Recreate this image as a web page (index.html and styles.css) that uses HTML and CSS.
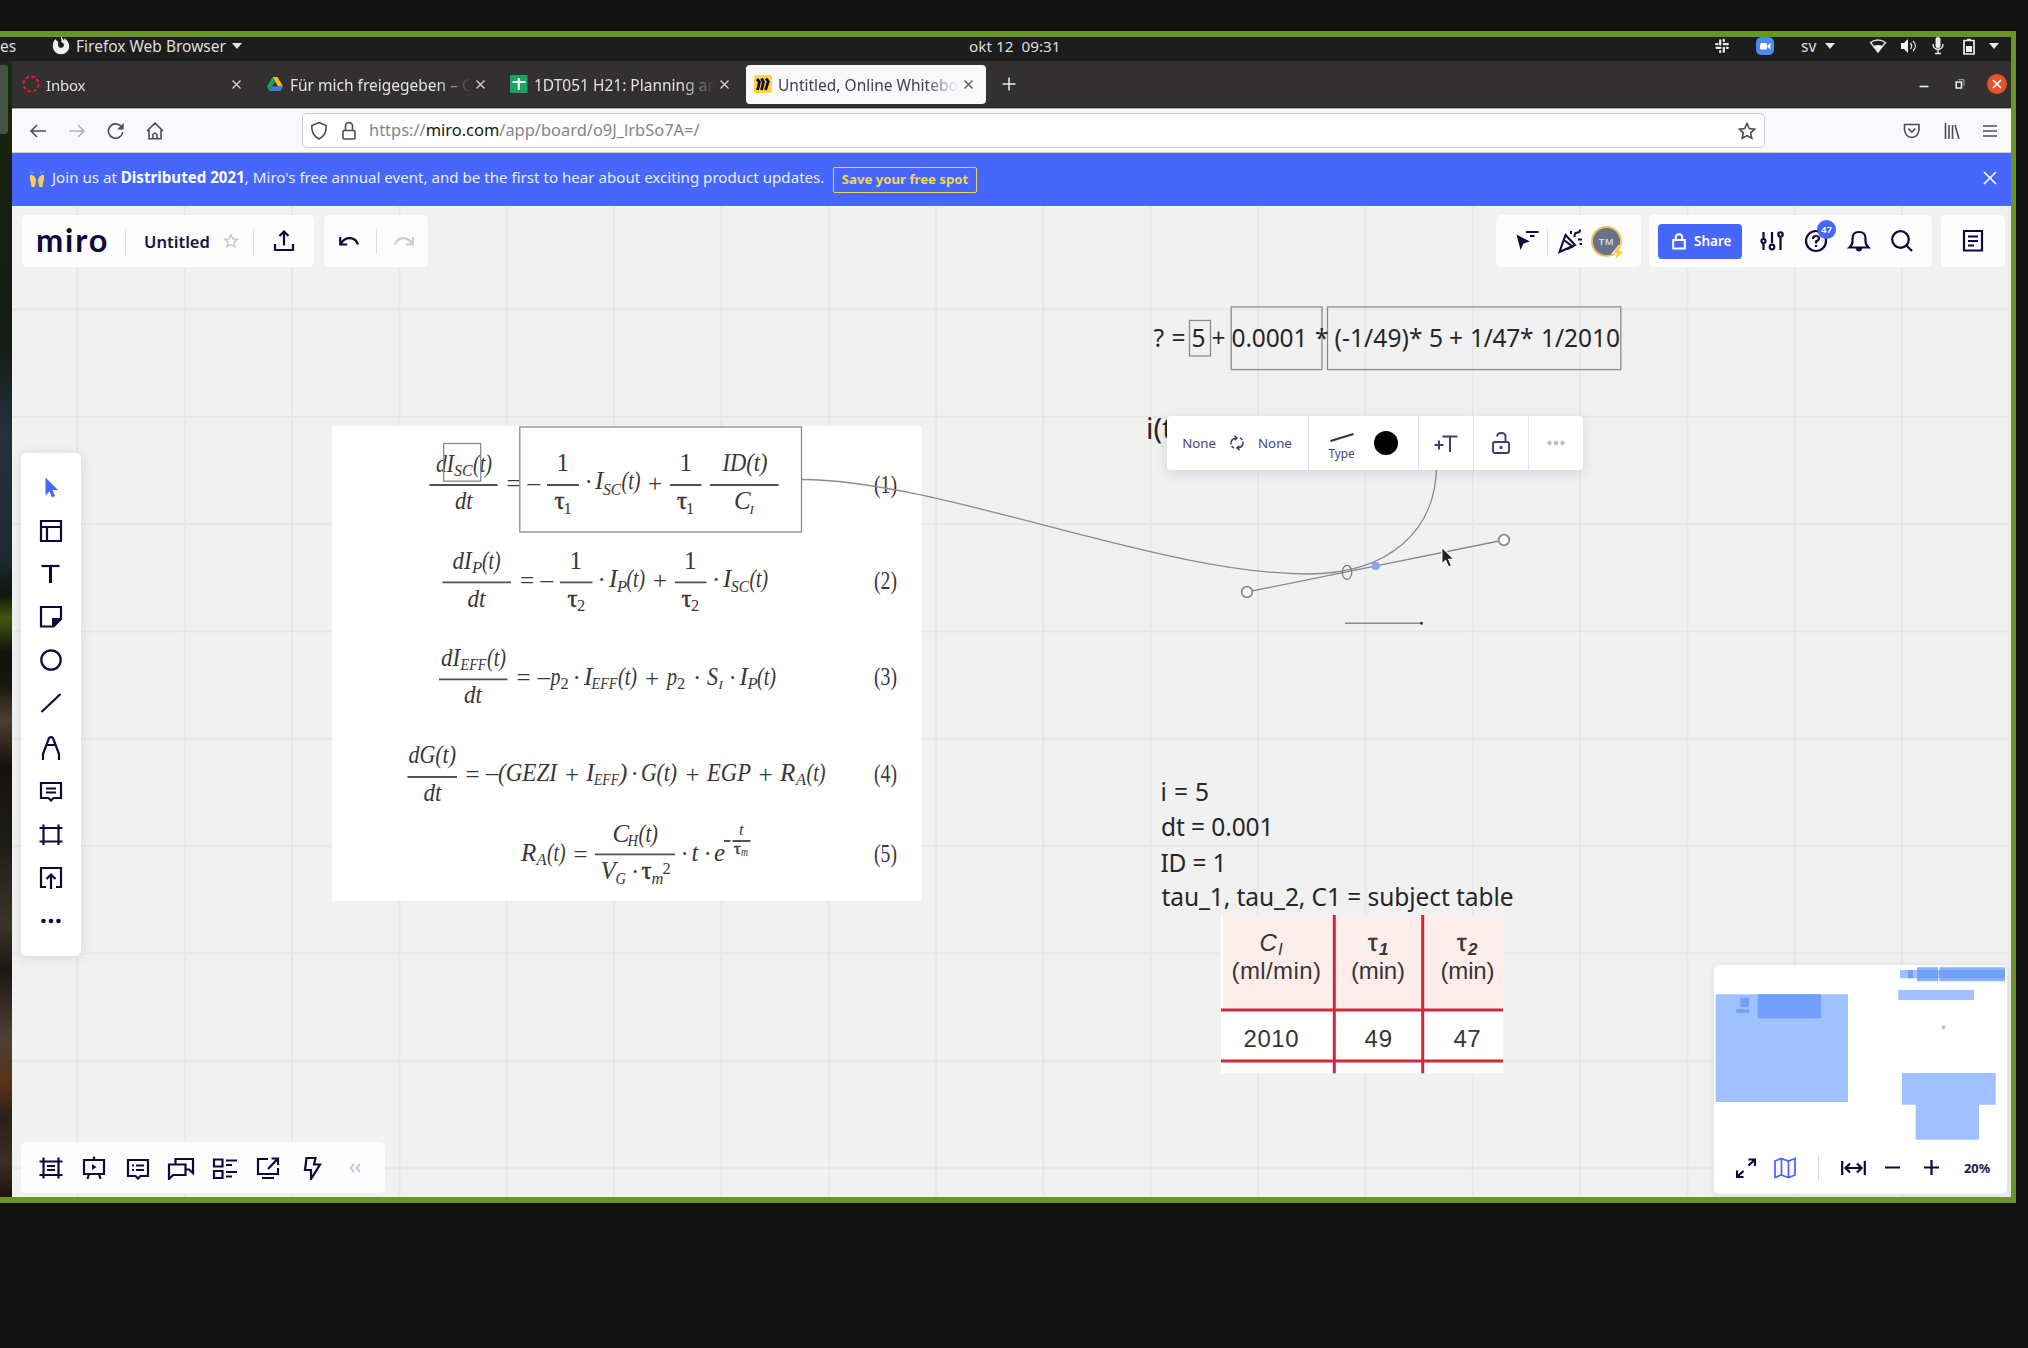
FILE: index.html
```html
<!DOCTYPE html>
<html lang="en">
<head>
<meta charset="utf-8">
<title>Untitled, Online Whiteboard</title>
<link rel="stylesheet" href="styles.css">
</head>
<body>
<div class="frame">
  <div class="sysbar">
    <span class="act">es</span>
    <svg class="fox" width="18" height="18" viewBox="0 0 18 18"><path d="M9 1.500c1 1.500.5 2.500 0 3.500 2.500.5 3.500 2.500 2.500 4.500-1 1.800-4 1.800-5 0C5.500 7 6.500 6 6 4.500 4.500 4 4 3 3.500 2 1.500 4 .8 6.500.8 9.200c0 4.500 3.600 8 8.200 8s8.200-3.500 8.200-8C17.200 5.500 15 2.500 12 1.200c.5 1 .5 2 0 2.500C11.500 2.500 10 1 9-.5z" fill="#eee"/></svg>
    <span class="app">Firefox Web Browser</span><i class="caret"></i>
    <span class="clock">okt 12&nbsp; 09:31</span>
    <div class="tray">
      <svg width="16" height="16" viewBox="0 0 16 16" stroke="#e6e6e6" stroke-width="2.300" stroke-linecap="round"><path d="M6.200 2.500v4M2.200 6.200h1.300M9.800 2v1M9.800 6.200h4M2.500 9.800h4M6.200 13.200v.8M9.800 9.800v4M12.800 9.800h1"/></svg>
      <svg width="18" height="18" viewBox="0 0 18 18"><rect width="18" height="18" rx="5.500" fill="#4a8cf0"/><rect x="4" y="6" width="7" height="6.500" rx="1.500" fill="#fff"/><path d="M11.500 8.500 14.500 6v6.500l-3-2.500z" fill="#fff"/></svg>
      <span class="sv">sv</span><i class="caret"></i>
      <svg width="18" height="16" viewBox="0 0 18 16"><path d="M1.500 4.500C6 1 12 1 16.500 4.500L9 14z" fill="none" stroke="#ddd" stroke-width="1.500"/><path d="M4.500 8c3-1.500 6-1.500 9 0L9 14z" fill="#eee"/></svg>
      <svg width="18" height="16" viewBox="0 0 18 16"><path d="M1 5h3l4-4v14l-4-4H1z" fill="#eee"/><path d="M10.500 5c1.500 2 1.500 4 0 6M13 3c3 3 3 7 0 10" fill="none" stroke="#ddd" stroke-width="1.300"/></svg>
      <svg width="14" height="18" viewBox="0 0 14 18"><rect x="4.500" width="5" height="11" rx="2.500" fill="#eee"/><path d="M2 7c0 7 10 7 10 0M7 12v4M4 16.500h6" fill="none" stroke="#eee" stroke-width="1.400"/></svg>
      <svg width="14" height="17" viewBox="0 0 14 17"><path d="M2 2.500h10v13.500H2zM5 1.500h4" fill="none" stroke="#eee" stroke-width="1.700"/><path d="M4 8h6v6H4z" fill="#eee"/></svg>
      <i class="caret"></i>
    </div>
  </div>
  <div class="desk">
    <div class="wall"><i></i></div>
    <div class="browser">
      <div class="tabs">
        <div class="tab t1"><svg width="18" height="18" viewBox="0 0 18 18"><circle cx="9" cy="9" r="7.500" fill="none" stroke="#f0191d" stroke-width="2" stroke-dasharray="3.700 2.200"/></svg><span>Inbox</span><b><svg width="9" height="9" viewBox="0 0 9 9"><path d="M.5.5l8 8M8.500.5l-8 8"/></svg></b></div>
        <div class="tab t2"><svg width="18" height="18" viewBox="0 0 18 18"><path d="M6.500 2h5L17 11.500h-5z" fill="#f9b916"/><path d="M6.500 2 9 6.500 3.700 16 1 11.500z" fill="#1f9d58"/><path d="M6.200 11.500H17L14.500 16H3.700z" fill="#3d78e8"/></svg><span>Für mich freigegeben – G</span><b><svg width="9" height="9" viewBox="0 0 9 9"><path d="M.5.5l8 8M8.500.5l-8 8"/></svg></b></div>
        <div class="tab t3"><svg width="18" height="18" viewBox="0 0 18 18"><rect width="17.500" height="18" rx="1" fill="#1ea362"/><path d="M2.500 7h13M8.800 3v12" stroke="#fff" stroke-width="2.200"/></svg><span>1DT051 H21: Planning an</span><b><svg width="9" height="9" viewBox="0 0 9 9"><path d="M.5.5l8 8M8.500.5l-8 8"/></svg></b></div>
        <div class="tab t4"><svg width="18" height="18" viewBox="0 0 18 18"><rect width="18" height="18" rx="2" fill="#fbd63c"/><path d="M3 4l2.500 3L3.500 15M7.500 3.500l2 3.500L7.500 15M12 3.500l2.300 3L11.500 15" fill="none" stroke="#15083a" stroke-width="2.800"/></svg><span>Untitled, Online Whitebo</span><b><svg width="9" height="9" viewBox="0 0 9 9"><path d="M.5.5l8 8M8.500.5l-8 8"/></svg></b></div>
        <svg class="plus" width="14" height="14" viewBox="0 0 14 14"><path d="M7 .5v13M.5 7h13" stroke="#eee" stroke-width="1.500"/></svg>
        <div class="winctl">
          <svg width="10" height="10" viewBox="0 0 10 10"><path d="M.5 7.500h9" stroke="#eee" stroke-width="1.600"/></svg>
          <svg width="10" height="10" viewBox="0 0 10 10"><path d="M1.200 3h5.300v6H1.200z" fill="none" stroke="#eee" stroke-width="1.600"/><path d="M3 .7h6V7" fill="none" stroke="#aaa" stroke-width="1"/></svg>
          <svg width="20" height="20" viewBox="0 0 20 20"><circle cx="10" cy="10" r="10" fill="#e4542c"/><path d="M6 6l8 8M14 6l-8 8" stroke="#fff" stroke-width="1.700"/></svg>
        </div>
      </div>
      <div class="nav">
        <div class="navl">
          <svg width="18" height="18" viewBox="0 0 18 18"><path d="M17 9H2M8 3 2 9l6 6"/></svg>
          <svg width="18" height="18" viewBox="0 0 18 18" opacity=".4"><path d="M1 9h15M10 3l6 6-6 6"/></svg>
          <svg width="18" height="18" viewBox="0 0 18 18"><path d="M15.800 10A7.200 7.200 0 1 1 14 4.200"/><path d="M16.700 1v6.500h-6.500z" fill="#4c4b52" stroke="none"/></svg>
          <svg width="18" height="18" viewBox="0 0 18 18"><path d="M1 9 9 1.200 17 9M3 8v8.700h12V8M7 16.500v-4q2-2.500 4 0v4"/></svg>
        </div>
        <div class="url">
          <svg width="18" height="20" viewBox="0 0 18 20"><path d="M9 1.500 16.200 4.500C16.500 11 14.500 15.500 9 18 3.500 15.500 1.500 11 1.800 4.500z"/></svg>
          <svg width="16" height="20" viewBox="0 0 16 20"><rect x="2" y="9.500" width="12" height="8.500" rx="1"/><path d="M4.500 9.500V5.500q0-4 3.500-4t3.500 4v4"/></svg>
          <span>https://<em>miro.com</em>/app/board/o9J_lrbSo7A=/</span>
          <svg class="fav" width="18" height="18" viewBox="0 0 18 18"><path d="M9 1.500l2.300 5 5.400.6-4 3.700 1.100 5.500L9 13.600l-4.800 2.700 1.100-5.500-4-3.700 5.400-.6z"/></svg>
        </div>
        <div class="navr">
          <svg width="18" height="16" viewBox="0 0 18 16"><path d="M1.500 1.500h14.500V7q-1 7-7.200 7.500Q2.500 14 1.500 7zM5.300 5.500l3.500 3.500 3.500-3.500"/></svg>
          <svg width="16" height="16" viewBox="0 0 16 16"><path d="M1.500 0v16M5 2v14M8.500 2v14M11 2l4 14"/></svg>
          <svg width="14" height="14" viewBox="0 0 14 14"><path d="M0 2h14M0 7h14M0 12h14"/></svg>
        </div>
      </div>
      <div class="banner">
        <svg width="16" height="17" viewBox="0 0 16 17"><path d="M1 4.500 2 3.500 5.500 5.500 7 9l-.5 4-1 3H2.500L2 12 .8 8zM15 4.500l-1-1-3.500 2L9 9l.5 4 1 3h3L14 12l1.200-4z" fill="#f8cd52"/><path d="M2 2 1.500.5M4 2.500V.8M12 2.500V.8M14 2l.5-1.500" stroke="#86b9f5"/></svg>
        <p>Join us at <strong>Distributed 2021</strong>, Miro's free annual event, and be the first to hear about exciting product updates.</p>
        <span class="spot">Save your free spot</span>
        <svg class="bx" width="14" height="14" viewBox="0 0 14 14"><path d="M1 1l12 12M13 1 1 13" stroke="#fff" stroke-width="1.600"/></svg>
      </div>
      <div class="board">
        <svg class="canvas" width="1999" height="991" viewBox="12 206 1999 991">
          <rect x="332" y="426" width="589.500" height="474.700" fill="#fff"/>
          <g class="eq">
            <text x="436" y="471.700" textLength="18" lengthAdjust="spacingAndGlyphs">dI</text><text class="s" x="454" y="475.700" textLength="18.500" lengthAdjust="spacingAndGlyphs">SC</text><text x="473" y="471.700" textLength="19" lengthAdjust="spacingAndGlyphs">(t)</text>
            <text x="455" y="509.300" textLength="17.500" lengthAdjust="spacingAndGlyphs">dt</text>
            <text class="r" x="506.500" y="492" textLength="13">=</text><text class="r" x="527.500" y="491" textLength="12">–</text>
            <text class="r" x="556.500" y="471">1</text><text class="r b" x="554.500" y="509">τ</text><text class="s r" x="563.500" y="513.500">1</text>
            <text class="r" x="584.500" y="490">·</text><text x="595" y="489.300">I</text><text class="s" x="603" y="494.700" textLength="18" lengthAdjust="spacingAndGlyphs">SC</text><text x="621.500" y="489.300" textLength="19" lengthAdjust="spacingAndGlyphs">(t)</text>
            <text class="r" x="648" y="492" textLength="13">+</text>
            <text class="r" x="679.500" y="471">1</text><text class="r b" x="677" y="509">τ</text><text class="s r" x="686" y="513.500">1</text>
            <text x="722.500" y="471" textLength="45" lengthAdjust="spacingAndGlyphs">ID(t)</text><text x="734" y="509" textLength="15">C</text><text class="xs" x="749.500" y="513.700">I</text>
            <text class="r" x="874" y="493" textLength="23" lengthAdjust="spacingAndGlyphs">(1)</text>

            <text x="452.500" y="568.700" textLength="19" lengthAdjust="spacingAndGlyphs">dI</text><text class="s" x="472" y="572.700" textLength="9">P</text><text x="482" y="568.700" textLength="18.500" lengthAdjust="spacingAndGlyphs">(t)</text>
            <text x="467.500" y="607" textLength="18" lengthAdjust="spacingAndGlyphs">dt</text>
            <text class="r" x="520" y="589" textLength="13">=</text><text class="r" x="540.500" y="588" textLength="12">–</text>
            <text class="r" x="569.500" y="568.700">1</text><text class="r b" x="567.500" y="607">τ</text><text class="s r" x="577" y="611">2</text>
            <text class="r" x="597.500" y="588">·</text><text x="609" y="587.300">I</text><text class="s" x="617" y="591.500" textLength="9">P</text><text x="626.500" y="587.300" textLength="18.500" lengthAdjust="spacingAndGlyphs">(t)</text>
            <text class="r" x="653" y="589" textLength="13">+</text>
            <text class="r" x="684" y="568.700">1</text><text class="r b" x="681.500" y="607">τ</text><text class="s r" x="691" y="611">2</text>
            <text class="r" x="712" y="588">·</text><text x="723" y="587.300">I</text><text class="s" x="731" y="591.500" textLength="18" lengthAdjust="spacingAndGlyphs">SC</text><text x="749.500" y="587.300" textLength="18.500" lengthAdjust="spacingAndGlyphs">(t)</text>
            <text class="r" x="874" y="589.300" textLength="23" lengthAdjust="spacingAndGlyphs">(2)</text>

            <text x="441" y="666.300" textLength="19" lengthAdjust="spacingAndGlyphs">dI</text><text class="s" x="460.500" y="670" textLength="26" lengthAdjust="spacingAndGlyphs">EFF</text><text x="487" y="666.300" textLength="19" lengthAdjust="spacingAndGlyphs">(t)</text>
            <text x="464" y="703.300" textLength="18" lengthAdjust="spacingAndGlyphs">dt</text>
            <text class="r" x="516.500" y="686" textLength="13">=</text><text class="r" x="537.500" y="685" textLength="12">–</text>
            <text x="550.500" y="685.300" textLength="10" lengthAdjust="spacingAndGlyphs">p</text><text class="s r" x="560.500" y="689">2</text><text class="r" x="572.500" y="686">·</text>
            <text x="584" y="685.300">I</text><text class="s" x="591.500" y="689" textLength="26" lengthAdjust="spacingAndGlyphs">EFF</text><text x="618" y="685.300" textLength="19" lengthAdjust="spacingAndGlyphs">(t)</text>
            <text class="r" x="645" y="687" textLength="13">+</text><text x="667" y="685.300" textLength="10" lengthAdjust="spacingAndGlyphs">p</text><text class="s r" x="677" y="689">2</text><text class="r" x="693" y="686">·</text>
            <text x="707" y="685.300" textLength="11" lengthAdjust="spacingAndGlyphs">S</text><text class="xs" x="718.500" y="689">I</text><text class="r" x="728.500" y="686">·</text>
            <text x="739.500" y="685.300">I</text><text class="s" x="747.500" y="689" textLength="9">P</text><text x="757" y="685.300" textLength="19" lengthAdjust="spacingAndGlyphs">(t)</text>
            <text class="r" x="874" y="685.300" textLength="23" lengthAdjust="spacingAndGlyphs">(3)</text>

            <text x="408.500" y="763.300" textLength="47.500" lengthAdjust="spacingAndGlyphs">dG(t)</text><text x="423.500" y="801.300" textLength="18" lengthAdjust="spacingAndGlyphs">dt</text>
            <text class="r" x="465.500" y="783" textLength="13">=</text><text class="r" x="486" y="781.300" textLength="12">–</text><text x="498" y="781.300" textLength="59" lengthAdjust="spacingAndGlyphs">(GEZI</text>
            <text class="r" x="565" y="783" textLength="13">+</text><text x="586" y="781.300">I</text><text class="s" x="594" y="785" textLength="25" lengthAdjust="spacingAndGlyphs">EFF</text><text x="619" y="781.300">)</text>
            <text class="r" x="630.500" y="782">·</text><text x="641" y="781.300" textLength="36" lengthAdjust="spacingAndGlyphs">G(t)</text><text class="r" x="685.500" y="783" textLength="13">+</text>
            <text x="707" y="781.300" textLength="44" lengthAdjust="spacingAndGlyphs">EGP</text><text class="r" x="758.500" y="783" textLength="13">+</text>
            <text x="780" y="781.300" textLength="15">R</text><text class="s" x="796" y="785">A</text><text x="806.500" y="781.300" textLength="19" lengthAdjust="spacingAndGlyphs">(t)</text>
            <text class="r" x="874" y="781.500" textLength="23" lengthAdjust="spacingAndGlyphs">(4)</text>

            <text x="521" y="861.300" textLength="15">R</text><text class="s" x="536.500" y="865">A</text><text x="547" y="861.300" textLength="18.500" lengthAdjust="spacingAndGlyphs">(t)</text>
            <text class="r" x="573.500" y="863" textLength="13">=</text>
            <text x="612.500" y="842" textLength="15">C</text><text class="s" x="627.500" y="845.500" textLength="10.500" lengthAdjust="spacingAndGlyphs">H</text><text x="638.500" y="842" textLength="19.500" lengthAdjust="spacingAndGlyphs">(t)</text>
            <text x="600.500" y="879.300" textLength="14">V</text><text class="s" x="615.500" y="884" textLength="10.500" lengthAdjust="spacingAndGlyphs">G</text><text class="r" x="631" y="880">·</text><text class="r b" x="641.500" y="879.300">τ</text><text class="s" x="651.500" y="884" textLength="11">m</text><text class="s r" x="662.500" y="873.700">2</text>
            <text class="r" x="680.500" y="862">·</text><text x="691.500" y="861.300">t</text><text class="r" x="703.500" y="862">·</text><text x="714" y="861.300" textLength="10">e</text>
            <text class="s" x="739" y="834.700">t</text><text class="s r b" x="734" y="854">τ</text><text class="xs" x="741" y="856" textLength="7" lengthAdjust="spacingAndGlyphs">m</text>
            <text class="r" x="874" y="861.500" textLength="23" lengthAdjust="spacingAndGlyphs">(5)</text>
          </g>
          <path d="M429.500 485h68M547 485h32M670 485h31.500M710 485h68.500M442.500 582.300H511M560 582.300h32.500M675 582.300h31.500M439 679.300h68.500M407.500 777H457M595 854.300h80M732.500 841h18M724 841h6.500" stroke="#555152" stroke-width="1.800"/>
          <g fill="none" stroke="#8b8b8d" stroke-width="1.300">
            <rect x="519.800" y="427" width="281.700" height="105"/>
            <rect x="443.700" y="443.500" width="37" height="37.700"/>
            <rect x="1189.500" y="320.500" width="21" height="35.500"/>
            <rect x="1231.200" y="306.900" width="90.800" height="62.700"/>
            <rect x="1327.500" y="306.900" width="293.300" height="62.700"/>
            <path d="M802 479.500C940 480 1160 574 1307 574 1390 574 1436 530 1436.500 466M1247 592 1504 540"/>
          </g>
          <g class="note">
            <text x="1153.500" y="347" textLength="32">? =</text><text x="1191.500" y="347">5</text><text x="1211.500" y="347">+</text>
            <text x="1231.500" y="347" textLength="76">0.0001</text><text x="1315" y="347">*</text>
            <text x="1334.500" y="347" textLength="88">(-1/49)*</text><text x="1429" y="347">5</text><text x="1449" y="347">+</text><text x="1470" y="347" textLength="63.500">1/47*</text><text x="1541" y="347" textLength="79">1/2010</text>
            <text class="big" x="1146" y="439">i(t)</text>
            <text x="1160.500" y="800.700" textLength="48.500">i = 5</text>
            <text x="1161" y="836" textLength="112.500">dt = 0.001</text>
            <text x="1160.500" y="871.500" textLength="66">ID = 1</text>
            <text x="1161.500" y="906" textLength="352">tau_1, tau_2, C1 = subject table</text>
          </g>
          <ellipse cx="1347" cy="572.300" rx="4.800" ry="7" fill="none" stroke="#777" stroke-width="1.200"/>
          <circle cx="1375.700" cy="566" r="4.300" fill="#86a8ee"/>
          <g fill="#fff" stroke="#8d8d8d" stroke-width="1.800"><circle cx="1247" cy="592" r="5.300"/><circle cx="1504" cy="540" r="5.300"/></g>
          <path d="M1345 623.300h77" stroke="#8b8b8d" stroke-width="1.500"/><circle cx="1421.500" cy="623.300" r="1.500" fill="#333"/>
          <path d="M1441.800 547v17l3.800-3.500 3 6.500 3-1.400-2.800-6.200h5.200z" fill="#222" stroke="#fff" stroke-width="1.300"/>
          <g>
            <rect x="1221" y="915" width="282" height="158.300" fill="#fff"/><rect x="1223" y="915" width="280" height="95" fill="#fdeeec"/>
            <path d="M1221 1010h282M1221 1061h282M1334.300 915v158.300M1422.700 915v158.300" stroke="#d3273c" stroke-width="3"/>
            <g class="tbl">
              <text x="1259.500" y="951" font-style="italic">C</text><text class="ts" x="1278" y="955" font-style="italic">I</text><text x="1231.500" y="979.300" textLength="89.500">(ml/min)</text>
              <text x="1368" y="951" class="tau">τ</text><text class="ts tb" x="1379" y="954.500">1</text><text x="1351" y="979.300" textLength="54">(min)</text>
              <text x="1457" y="951" class="tau">τ</text><text class="ts tb" x="1468" y="954.500">2</text><text x="1440.500" y="979.300" textLength="54">(min)</text>
              <text x="1243.500" y="1047" textLength="55">2010</text><text x="1364.500" y="1047" textLength="27.500">49</text><text x="1453.500" y="1047" textLength="27">47</text>
            </g>
          </g>
        </svg>

        <div class="top">
          <div class="panel p1">
            <span class="logo">miro</span><i class="sep"></i><span class="name">Untitled</span>
            <svg class="star" width="16" height="16" viewBox="0 0 16 16"><path d="M8 1.800l1.900 4.100 4.300.5-3.200 3 .9 4.400L8 11.600l-3.900 2.200.9-4.400-3.200-3 4.300-.5z" fill="none" stroke="#c6c6ce" stroke-width="1.500"/></svg>
            <i class="sep"></i>
            <svg class="up ic" width="24" height="24" viewBox="0 0 24 24"><path d="M12 16.500V3M7.500 7 12 2.500 16.500 7M3 15v6h18v-6"/></svg>
          </div>
          <div class="panel p2">
            <svg class="ic" width="22" height="16" viewBox="0 0 22 16"><path d="M2.200 4v7.500h7M3 10.500C7 3.500 17 3 20 11.500"/></svg><i class="sep"></i>
            <svg class="ic" width="22" height="16" viewBox="0 0 22 16" opacity=".2"><path d="M19.800 4v7.500h-7M19 10.500C15 3.500 5 3 2 11.500"/></svg>
          </div>
          <div class="panel p3">
            <svg class="ic" width="24" height="24" viewBox="0 0 24 24"><path d="M1.500 5.500 15 12.500 8.500 14.500 5.500 21z" fill="#10073b" stroke="none"/><path d="M11 3h12.500M15 7h4.500"/></svg><i class="sep"></i>
            <svg class="ic" width="26" height="26" viewBox="0 0 26 26"><path d="M2.500 24 8.500 7 18 17zM7 12l8.500 6.500-5 2.500M14 6V3M17.500 9c0-4 1-4.500 3.500-4.500q2 0 2-3M21 11.500h4M22.500 16h2.500" stroke-width="2.100"/></svg>
            <div class="ava"><span>TM</span><svg width="14" height="16" viewBox="0 0 14 16"><path d="M8 0 1 8.500h4.500L4 15.500 13 6H8.500L10.500.8z" fill="#fbcf3c" stroke="#fff" stroke-width=".8"/></svg></div>
          </div>
          <div class="panel p4">
            <div class="share"><svg width="14" height="17" viewBox="0 0 14 17"><path d="M1.200 7h11.600v8.500H1.200zM3.800 7V4.500Q3.800 1.200 7 1.200t3.200 3.300V7" fill="none" stroke="#fff" stroke-width="2"/></svg>Share</div>
            <svg class="ic i1" width="24" height="24" viewBox="0 0 24 24"><path d="M3.500 3v18M12 3v11M20.500 8v13"/><circle cx="3.500" cy="12" r="2" fill="#fff"/><circle cx="12" cy="18" r="2.300" fill="#fff"/><circle cx="20.500" cy="5.500" r="2.200" fill="#fff"/></svg>
            <div class="help"><svg class="ic" width="24" height="24" viewBox="0 0 24 24"><circle cx="12" cy="12" r="10"/><path d="M9 10q0-3 3-3t3 2.500q0 1.500-3 3v2M12 16v2"/></svg><span>47</span></div>
            <svg class="ic i2" width="24" height="24" viewBox="0 0 24 24"><path d="M2.500 18.500h19Q18.500 16 18.500 12V9.500Q18.500 3 12 3T5.500 9.500V12q0 4-3 6.500z"/><path d="M8.500 19h7q-1 3.500-3.500 3.500T8.500 19z" fill="#10073b" stroke="none"/></svg>
            <svg class="ic i3" width="24" height="24" viewBox="0 0 24 24"><circle cx="10.500" cy="10.500" r="8.300"/><path d="M16.500 16.500 22 22"/></svg>
          </div>
          <div class="panel p5"><svg class="ic" width="24" height="24" viewBox="0 0 24 24"><path d="M3 2h18v19.500H3zM7 7.500h10M7 12h10M7 16.500h6"/></svg></div>
        </div>

        <div class="tools panel">
          <svg width="24" height="24" viewBox="0 0 24 24"><path d="M6.500 1.500 19 14h-5.500l2.500 6-3 1.500-2.500-6-4 4z" fill="#4666fc"/></svg>
          <svg class="ic" width="24" height="24" viewBox="0 0 24 24"><path d="M2 2h20v20H2zM2 8h20M8 8v14"/></svg>
          <svg class="ic" width="24" height="24" viewBox="0 0 24 24"><path d="M2.500 4h18" stroke-width="2.200"/><path d="M11.500 4v17" stroke-width="3"/></svg>
          <svg class="ic" width="24" height="24" viewBox="0 0 24 24"><path d="M2 2h20v12l-7.500 7.500H2z"/><path d="M13 13h9v2l-7 7h-2z" fill="#10073b" stroke="none"/></svg>
          <svg class="ic" width="24" height="24" viewBox="0 0 24 24"><circle cx="12" cy="12" r="9.700"/></svg>
          <svg class="ic" width="24" height="24" viewBox="0 0 24 24"><path d="M2.500 21 21.500 3"/></svg>
          <svg class="ic" width="24" height="26" viewBox="0 0 24 26"><path d="M4 25v-6L10 3q2-2 4 0l6 16v6M8 10h8"/></svg>
          <svg class="ic" width="24" height="24" viewBox="0 0 24 24"><path d="M2 3h20v15h-7.500L12 20.500 9.500 18H2zM7 8.500h10M7 12.500h10"/></svg>
          <svg class="ic" width="24" height="24" viewBox="0 0 24 24"><path d="M.5 5h23M.5 18.500h23M4.500 1.500V22M19.500 1.500V22"/></svg>
          <svg class="ic" width="24" height="24" viewBox="0 0 24 24"><path d="M7 21H2V2h20v19h-5M12 23V9M7.500 13 12 8.500l4.500 4.500"/></svg>
          <svg width="24" height="24" viewBox="0 0 24 24" fill="#10073b"><circle cx="4.500" cy="12" r="2.300"/><circle cx="12" cy="12" r="2.300"/><circle cx="19.500" cy="12" r="2.300"/></svg>
        </div>

        <div class="ctx">
          <div class="c1"><span>None</span><svg width="14" height="16" viewBox="0 0 14 16" fill="none" stroke="#443a70" stroke-width="1.500"><path d="M1 9.500Q.5 4 6 3M4.500.8 7 3 4.800 5.300M13 6.500Q13.500 12 8 13M9.500 15.200 7 13l2.200-2.300M10 2.800q1.500.8 2.300 2.200M4 13.200Q2.500 12.400 1.700 11"/></svg><span>None</span></div>
          <div class="c2"><div class="type"><svg width="24" height="9" viewBox="0 0 24 9"><path d="M.5 8 23.500 1" stroke="#352b63" stroke-width="2"/></svg>Type</div><i></i></div>
          <div class="c3"><svg width="24" height="18" viewBox="0 0 24 18" stroke="#443a70" stroke-width="2" fill="none"><path d="M.5 11h9M5 6.500v9M8.500 2.500h15M16 2.500V18"/></svg></div>
          <div class="c3"><svg width="18" height="24" viewBox="0 0 18 24" stroke="#443a70" stroke-width="1.900" fill="none"><rect x="1" y="11" width="16" height="11" rx="2"/><path d="M5 5.500Q5 2 9.300 2t4.200 4v5"/><circle cx="9" cy="16.500" r=".7"/></svg></div>
          <div class="c4"><svg width="18" height="6" viewBox="0 0 18 6" fill="#bdbacb"><circle cx="2.500" cy="3" r="2.200"/><circle cx="9" cy="3" r="2.200"/><circle cx="15.500" cy="3" r="2.200"/></svg></div>
        </div>

        <div class="bottom panel">
          <svg class="ic" width="24" height="24" viewBox="0 0 24 24"><path d="M.5 5.500h23M.5 19h23M4.500 1.500v21M19.500 1.500v21M8 10h8M8 14h8"/></svg>
          <svg class="ic" width="24" height="24" viewBox="0 0 24 24"><path d="M2 4h20v14H2zM12 4V.5M7 18l-1.500 5M17 18l1.500 5"/><path d="M10 8v6l4.500-3z" fill="#10073b" stroke="none"/></svg>
          <svg class="ic" width="24" height="24" viewBox="0 0 24 24"><path d="M2 4h20v16h-7.500L12 22.500 9.500 20H2zM6 9.500h2M10 9.500h8M6 14h2M10 14h8"/></svg>
          <svg class="ic" width="28" height="24" viewBox="0 0 28 24"><path d="M8.500 8V3h17.500v14l-4-3.500h-3M2 23V8.500h16.500v10.500H6z"/></svg>
          <svg class="ic" width="26" height="24" viewBox="0 0 26 24"><path d="M2 3.500h8.500v7H2zM2 15h8.500v7H2zM14 4.500h11M14 9h6M14 16h11M14 20.500h6"/></svg>
          <svg class="ic" width="24" height="24" viewBox="0 0 24 24"><path d="M12 3H2v15h20v-6M6 22h12M12 13 21.500 3M15.500 2.500H22V9"/></svg>
          <svg class="ic" width="24" height="24" viewBox="0 0 24 24"><path d="M6.500 2h9l-1.500 6.500h6L11 23V14H5z"/></svg>
          <svg width="14" height="12" viewBox="0 0 14 12" fill="none" stroke="#c9c9cf" stroke-width="1.900"><path d="M6 2 2.500 6 6 10M12 2 8.500 6l3.500 4"/></svg>
        </div>

        <div class="mini">
          <svg width="293" height="177" viewBox="1714 965 293 177">
            <g fill="#a0c1ff"><path d="M1715.700 994.300H1848V1102h-132.300zM1900 970h105v8.300h-105zM1898.300 990H1974v10h-75.700zM1902 1073h93.700v31.700H1979v35h-63.300v-35H1902zM1942 1025.500h3v3.500h-3z"/></g>
            <path d="M1917 967.300h21v14h-21zM1939.300 967.300H2005v14h-65.700z" fill="#8bb2fd"/>
            <path d="M1757.700 994.300H1821v24h-63.300zM1740.300 997.700h8.700v9h-8.700zM1736.300 1009.300h12.700v3.500h-12.700zM1908 970h5v8.300h-5zM1917 970h21v8.300h-21zM1939.300 970H2005v8.300h-65.700z" fill="#719ffa"/>
          </svg>
          <div class="zoom">
            <svg class="ic" width="20" height="20" viewBox="0 0 20 20"><path d="M12.500 1.500H19V8M19 1.500l-6.500 6M7.500 19H1v-6.500M1 19l6.500-6"/></svg>
            <svg class="ic mp" width="22" height="22" viewBox="0 0 22 22"><path d="M1 4l6-2.500L14.500 4 21 1.500V18l-6.500 2.500L7 18 1 20.500zM7.500 2v16M14.500 4v16"/></svg>
            <i class="sep"></i>
            <svg class="ic ft" width="25" height="16" viewBox="0 0 25 16"><path d="M1.200 1v14M23.800 1v14M4.500 8h16M9 3.500 4.500 8 9 12.500M16 3.500 20.500 8 16 12.500"/></svg>
            <svg class="ic mn" width="15" height="15" viewBox="0 0 15 15"><path d="M0 7.500h15"/></svg>
            <svg class="ic pl" width="15" height="15" viewBox="0 0 15 15"><path d="M0 7.500h15M7.500 0v15"/></svg>
            <span>20%</span>
          </div>
        </div>
      </div>
    </div>
  </div>
</div>
</body>
</html>
```
FILE: styles.css
```css
* { box-sizing: border-box; }
body { margin: 0; background: #111; font-family: "Noto Sans", sans-serif; width: 2028px; height: 1348px; overflow: hidden; }
svg { display: block; flex: none; }
.frame { margin-top: 31px; width: 2016px; height: 1172px; border: 6px solid #699428; border-left: 0; border-right-width: 5px; display: flex; flex-direction: column; overflow: hidden; background: #1d1d1d; }
.caret { width: 0; height: 0; border: 5px solid transparent; border-top: 6px solid #e6e6e6; border-bottom: 0; flex: none; }

/* System bar */
.sysbar { height: 24px; flex: none; display: flex; align-items: center; color: #dedede; font: 15.500px/18px "Noto Sans", sans-serif; padding-bottom: 6px; white-space: nowrap; }
.act { width: 52px; }
.app { margin-left: 6px; width: 156px; }
.clock { margin-left: 727px; font-size: 15.300px; width: 96px; }
.tray { display: flex; align-items: center; margin-left: 649px; flex: 1; }
.tray > :nth-child(2) { margin-left: 26px; }
.sv { margin-left: 27px; width: 24px; }
.tray > :nth-child(5) { margin-left: 34px; }
.tray > :nth-child(6) { margin-left: 13px; }
.tray > :nth-child(7) { margin-left: 13px; }
.tray > :nth-child(8) { margin-left: 17px; }
.tray > :nth-child(9) { margin-left: 13px; }

.desk { display: flex; flex: 1; min-height: 0; }
.wall { width: 12px; flex: none; padding-top: 4px; background: linear-gradient(#1b2a14, #16200f 9%, #141c15 25%, #22333d 33%, #1c2a30 44%, #10140c 47%, #46560f 49%, #10130c 52%, #1a1712 55%, #4d4030 58%, #161210 62%, #1c1a17 68%, #3a342a 76%, #1c1713 80%, #4a4234 86%, #5a3118 90%, #2a2119 93%, #3a2f22 97%, #20120e); }
.wall i { display: block; width: 8px; height: 69px; background: #46543f; border-radius: 0 3px 3px 0; }
.browser { flex: 1; display: flex; flex-direction: column; min-width: 0; }

/* Tabs */
.tabs { height: 47px; flex: none; background: #333031; display: flex; align-items: center; border-bottom: 1px solid #252324; color: #e4e2e2; font-size: 15.500px; }
.tab { display: flex; align-items: center; height: 39px; border-radius: 4px; flex: none; }
.tab span { margin-left: 6px; padding-top: 1px; white-space: nowrap; flex: 1; min-width: 0; -webkit-mask-image: linear-gradient(90deg, #000 calc(100% - 34px), transparent); mask-image: linear-gradient(90deg, #000 calc(100% - 34px), transparent); }
.tab b { width: 18px; display: flex; justify-content: center; }
.tab b svg { fill: none; stroke: #d5d3d3; stroke-width: 1.300; }
.t1 { margin-left: 10px; width: 223px; }
.t1 span { font-size: 15px; letter-spacing: -.2px; }
.t2 { margin-left: 21px; width: 223px; }
.t3 { margin-left: 21px; width: 223px; }
.t4 { margin-left: 13px; width: 240px; padding: 0 9px 0 8px; background: #f9f8fb; color: #444247; }
.t4 b svg { stroke: #555; }
.plus { margin-left: 16px; }
.winctl { margin-left: auto; display: flex; align-items: center; padding-right: 4px; }
.winctl svg:nth-child(2) { margin: 0 22px 0 26px; }

/* Address bar */
.nav { height: 45px; flex: none; background: #f9f8fb; border-top: 1px solid #aaa; border-bottom: 1px solid #ccc; display: flex; align-items: center; }
.nav svg { fill: none; stroke: #4c4b52; stroke-width: 1.600; }
.navl { width: 290px; display: flex; gap: 21px; padding-left: 17px; }
.url { width: 1463px; height: 35px; background: #fff; border: 1px solid #cbcad0; border-radius: 5px; display: flex; align-items: center; padding-left: 7px; font-size: 16.450px; color: #85848b; }
.url svg:nth-child(2) { margin-left: 13px; }
.url span { margin-left: 12px; white-space: nowrap; padding-bottom: 2px; }
.url em { font-style: normal; color: #18171d; }
.url .fav { margin-left: auto; margin-right: 8px; }
.navr { display: flex; align-items: center; margin-left: auto; gap: 23px; padding-right: 14px; }

/* Banner */
.banner { height: 53px; flex: none; background: #4666fc; display: flex; align-items: center; padding-left: 17px; color: #fff; }
.banner p { margin: -5px 0 0 7px; font-size: 15.120px; line-height: 20px; width: 781px; white-space: nowrap; color: #e9edff; }
.banner strong { color: #fff; }
.spot { width: 144px; height: 26px; border: 1.500px solid #efd54f; border-radius: 2px; color: #f3d650; font-weight: 700; font-size: 13.200px; line-height: 23px; text-align: center; white-space: nowrap; }
.bx { margin-left: auto; margin-right: 14px; margin-top: -3px; }

/* Board */
.board { flex: 1; position: relative; min-height: 0; background-color: #f1f1f2; background-image: linear-gradient(90deg, #e8e8eb 2px, transparent 2px), linear-gradient(#e8e8eb 2px, transparent 2px); background-size: 107.340px 107.340px; background-position: 64.500px 0, 0 102.500px; }
.canvas { position: absolute; left: 0; top: 0; }
.eq text { font: italic 25px "Liberation Serif", serif; fill: #3b3738; }
.eq .s { font-size: 16.500px; }
.eq .xs { font-size: 13px; }
.eq .r { font-style: normal; }
.eq .b { stroke: #3b3738; stroke-width: .5; }
.note text { font: 24.500px "Noto Sans", sans-serif; fill: #26262a; }
.note .big { font-size: 29px; }
.tbl text { font: 24px "Liberation Sans", sans-serif; fill: #3b3335; }
.tbl text[font-style] { font-style: italic; }
.tbl .ts { font-size: 17px; }
.tbl .tb { font-weight: 700; font-style: italic; }
.tbl .tau { stroke: #3b3335; stroke-width: .5; }

.panel { background: #fdfdff; border-radius: 5px; display: flex; align-items: center; }
.ic { fill: none; stroke: #10073b; stroke-width: 2.200; }
.sep { width: 1px; height: 26px; background: #dddce3; flex: none; }
.top { position: relative; display: flex; padding: 9px 0 0 10px; height: 61px; }
.top .panel { height: 52px; flex: none; }
.p1 { width: 292px; padding-left: 14px; }
.logo { font: 700 32.500px/36px "Lato", sans-serif; letter-spacing: 1.900px; color: #10073b; width: 89px; padding-bottom: 3px; }
.name { margin-left: 18px; width: 79px; font-weight: 600; font-size: 16.600px; color: #1a1240; }
.star { margin-right: 14px; }
.up { margin-left: 18px; }
.p2 { width: 104px; margin-left: 10px; justify-content: center; gap: 16px; }
.p3 { width: 145px; margin-left: 1068px; padding-left: 19px; }
.p3 .sep { margin: 0 9px 0 8px; }
.ava { position: relative; width: 31px; height: 31px; border-radius: 50%; border: 2.500px solid #eebe5c; background: #667389; color: #d8dce4; font-size: 9.500px; font-weight: 600; letter-spacing: .6px; display: flex; align-items: center; justify-content: center; margin-left: 8px; }
.ava svg { position: absolute; right: -5px; bottom: -6px; }
.p4 { width: 283px; margin-left: 8px; padding-left: 9px; }
.share { width: 84px; height: 35px; background: #4666fc; border-radius: 4px; color: #fff; font-weight: 600; font-size: 13.500px; display: flex; align-items: center; gap: 8px; padding-left: 14px; }
.i1 { margin-left: 18px; }
.help { position: relative; margin-left: 20px; }
.help span { position: absolute; left: 13px; top: -9px; width: 19px; height: 19px; border-radius: 50%; background: #4666fc; color: #fff; font-size: 9.500px; font-weight: 600; line-height: 19px; text-align: center; }
.i2 { margin-left: 19px; }
.i3 { margin-left: 19px; }
.p5 { width: 64px; margin-left: 9px; justify-content: center; }

.tools { position: absolute; left: 9px; top: 247px; width: 60px; height: 503px; padding: 13px 0; flex-direction: column; justify-content: space-around; background: #fff; box-shadow: 0 2px 12px rgba(60, 50, 110, .14); }

.ctx { position: absolute; left: 1155px; top: 210px; width: 416px; height: 54px; background: #fff; border-radius: 4px; display: flex; box-shadow: 0 3px 12px rgba(60, 50, 110, .16); color: #4c4472; font-size: 13.300px; }
.ctx > div { display: flex; align-items: center; justify-content: center; border-left: 1px solid #e3e2e9; width: 55px; }
.ctx > .c1 { width: 141px; border-left: 0; gap: 14px; padding-right: 1px; }
.ctx > .c2 { width: 110px; gap: 19px; padding-right: 1px; }
.c2 .type { display: flex; flex-direction: column; align-items: center; font-size: 11.800px; line-height: 16px; padding-top: 7px; gap: 3px; }
.c2 i { width: 24px; height: 24px; border-radius: 50%; background: #000; }

.bottom { position: absolute; left: 9px; top: 936px; width: 364px; height: 51px; padding: 0 8px; display: grid; grid-template-columns: repeat(8, 43.500px); justify-items: center; }

.mini { position: absolute; left: 1702px; top: 759px; width: 293px; height: 229px; background: #fff; border-radius: 5px; box-shadow: 0 1px 6px rgba(60, 50, 110, .14); overflow: hidden; }
.zoom { height: 51px; display: flex; align-items: center; padding-left: 22px; }
.mp { margin-left: 18px; stroke: #5266f5; stroke-width: 1.800; }
.zoom .sep { margin: 0 22px 0 22px; }
.mn { margin-left: 19px; }
.pl { margin-left: 24px; }
.zoom span { margin-left: 25px; font-size: 12.800px; font-weight: 700; color: #1c1440; }
```
